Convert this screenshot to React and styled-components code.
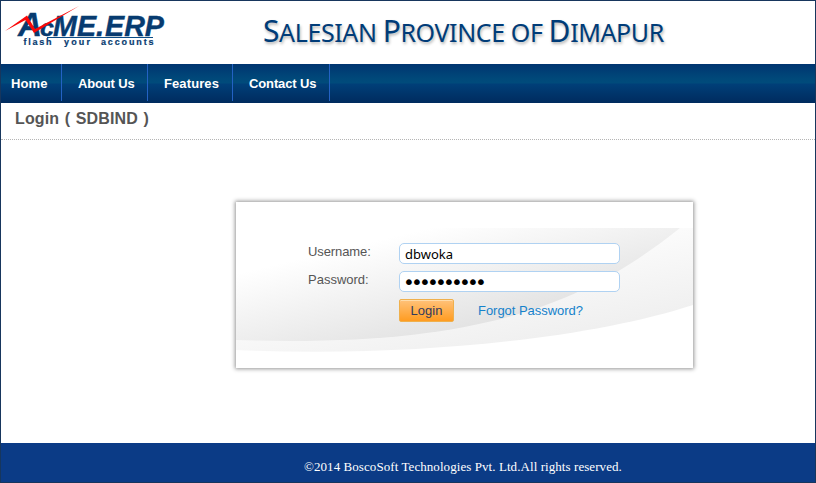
import React from "react";
import styled, { createGlobalStyle } from "styled-components";

const GlobalStyle = createGlobalStyle`
  * { box-sizing: border-box; }
  body { margin: 0; background: #fff; }
`;

const Page = styled.div`
  width: 816px;
  height: 483px;
  border: 1px solid #17365d;
  display: flex;
  flex-direction: column;
  overflow: hidden;
  background: #fff;
  font-family: "Liberation Sans", Arial, sans-serif;
`;

const Header = styled.header`
  height: 63px;
  flex: none;
  display: flex;
`;

const Logo = styled.svg`
  width: 180px;
  height: 63px;
  flex: none;
`;

const Title = styled.h1`
  margin: 9px 0 0 82px;
  font: 400 25px/42px "Noto Sans", "Open Sans", sans-serif;
  color: #003c78;
  letter-spacing: ${(p) => p.$spacing}px;
  text-shadow: 1px 2px 3px rgba(0, 0, 0, 0.3);
  white-space: nowrap;
`;

const Initial = styled.span`
  font-size: 30px;
`;

const Nav = styled.nav`
  height: 39px;
  flex: none;
  display: flex;
  align-items: flex-start;
  background: linear-gradient(#003570 0, #00497a 38%, #004b7b 48%, #003f78 52%, #002b5e 100%);
`;

const NavItem = styled.a`
  width: ${(p) => p.$width}px;
  height: 37px;
  padding-left: ${(p) => p.$indent}px;
  border-right: 1px solid #2362c4;
  color: #fff;
  font-size: 13px;
  font-weight: 700;
  line-height: 39px;
  letter-spacing: ${(p) => p.$spacing || 0}px;
  white-space: nowrap;
`;

const Heading = styled.h2`
  height: 37px;
  flex: none;
  margin: 0;
  padding-left: 14px;
  border-bottom: 1px dotted #b5b5b5;
  color: #555;
  font-size: 16px;
  line-height: 31px;
  word-spacing: 1px;
  letter-spacing: 0.13px;
`;

const Main = styled.main`
  flex: 1;
  padding: 62px 0 0 235px;
`;

const Card = styled.form`
  display: grid;
  width: 457px;
  height: 166px;
  background: #fff;
  box-shadow: 0 0 4px 1px rgba(0, 0, 0, 0.42);
`;

const Swoosh = styled.svg`
  grid-area: 1 / 1;
  width: 457px;
  height: 166px;
`;

const Fields = styled.div`
  grid-area: 1 / 1;
  display: grid;
  grid-template-columns: 91px 221px;
  grid-template-rows: 21px 21px 23px;
  row-gap: 7px;
  padding: 41px 0 0 72px;
`;

const Label = styled.label`
  color: #555;
  font-size: 13px;
  line-height: 18px;
  letter-spacing: ${(p) => p.$spacing}px;
`;

const Field = styled.input`
  width: 221px;
  height: 21px;
  padding: 1px 5px 0 ${(p) => (p.type === "password" ? 3 : 5)}px;
  border: 1px solid #b0d2f2;
  border-radius: 5px;
  outline: 0;
  background: #fff;
  color: #000;
  font: ${(p) => (p.type === "password" ? '20px/18px "DejaVu Sans"' : '13px "Noto Sans"')}, sans-serif;
  letter-spacing: ${(p) => p.$spacing}px;
`;

const Actions = styled.div`
  grid-column: 2;
  display: flex;
  gap: 24px;
`;

const Submit = styled.button`
  width: 55px;
  height: 23px;
  padding: 0;
  border: 1px solid #efb04d;
  border-radius: 2px;
  background: linear-gradient(#ffc27a, #ff9c21);
  box-shadow: inset 0 1px 0 #ffdcaa;
  color: #333a5c;
  font: 13px "Liberation Sans", Arial, sans-serif;
`;

const Forgot = styled.a`
  color: #1682cb;
  font-size: 13px;
  line-height: 23px;
  letter-spacing: -0.04px;
  white-space: nowrap;
`;

const Footer = styled.footer`
  height: 39px;
  flex: none;
  padding-left: 303px;
  background: #0b3b86;
  color: #fff;
  font: 13px/47px "Liberation Serif", "Times New Roman", serif;
  letter-spacing: 0.07px;
`;

const links = [
  { label: "Home", width: 61, indent: 10, spacing: 0.1 },
  { label: "About Us", width: 86, indent: 16, spacing: -0.15 },
  { label: "Features", width: 85, indent: 16, spacing: 0.1 },
  { label: "Contact Us", width: 97, indent: 16, spacing: -0.13 },
];

function AcmeLogo() {
  return (
    <Logo viewBox="1 1 180 63" fill="#073b70" fontFamily="Liberation Sans, Arial, sans-serif" fontWeight="700">
      <g fontStyle="italic" stroke="#073b70" strokeWidth=".4">
        <text x="18" y="36" fontSize="33" textLength="24" lengthAdjust="spacingAndGlyphs">A</text>
        <text x="40" y="36" fontSize="24" textLength="14" lengthAdjust="spacingAndGlyphs">c</text>
        <text x="53" y="36" fontSize="29.5" textLength="43" lengthAdjust="spacingAndGlyphs">ME</text>
        <text x="96" y="36" fontSize="29.5">.</text>
        <text x="105" y="36" fontSize="29.5" textLength="59" lengthAdjust="spacingAndGlyphs">ERP</text>
      </g>
      <path d="M47 37.5H153" stroke="#0a4a84" strokeWidth="1" />
      <g fontSize="9" stroke="#073b70" strokeWidth=".2">
        <text x="23.5" y="45" textLength="28">flash</text>
        <text x="64" y="45" textLength="26">your</text>
        <text x="101" y="45" textLength="52.5">accounts</text>
      </g>
      <path d="M5 31L27 15.5L35 29L79 6L34 33L25.5 20Z" fill="#fa0808" />
    </Logo>
  );
}

export default function App() {
  return (
    <>
      <GlobalStyle />
      <Page>
        <Header>
          <AcmeLogo />
          <Title $spacing={-0.39}>
            <Initial>S</Initial>ALESIAN <Initial>P</Initial>ROVINCE OF <Initial>D</Initial>IMAPUR
          </Title>
        </Header>
        <Nav>
          {links.map((l) => (
            <NavItem key={l.label} $width={l.width} $indent={l.indent} $spacing={l.spacing}>{l.label}</NavItem>
          ))}
        </Nav>
        <Heading>Login ( SDBIND )</Heading>
        <Main>
          <Card>
            <Swoosh viewBox="0 0 457 166">
              <defs>
                <linearGradient id="outer" gradientUnits="userSpaceOnUse" x1="340" y1="20" x2="365" y2="145">
                  <stop offset="0" stopColor="#fff" />
                  <stop offset="1" stopColor="#ededed" />
                </linearGradient>
                <linearGradient id="inner" gradientUnits="userSpaceOnUse" x1="185" y1="12" x2="215" y2="138">
                  <stop offset=".12" stopColor="#fff" />
                  <stop offset="1" stopColor="#e1e1e1" />
                </linearGradient>
              </defs>
              <path d="M0 26H457V103C355 136 180 156 0 148Z" fill="url(#outer)" />
              <path d="M0 26H444C350 101 245 146 0 138Z" fill="url(#inner)" />
            </Swoosh>
            <Fields>
              <Label htmlFor="user" $spacing={-0.1}>Username:</Label>
              <Field id="user" defaultValue="dbwoka" $spacing={0} />
              <Label htmlFor="pass" $spacing={0}>Password:</Label>
              <Field id="pass" type="password" defaultValue="dbwoka2014" $spacing={-3.8} />
              <Actions>
                <Submit type="button">Login</Submit>
                <Forgot>Forgot Password?</Forgot>
              </Actions>
            </Fields>
          </Card>
        </Main>
        <Footer>©2014 BoscoSoft Technologies Pvt. Ltd.All rights reserved.</Footer>
      </Page>
    </>
  );
}
